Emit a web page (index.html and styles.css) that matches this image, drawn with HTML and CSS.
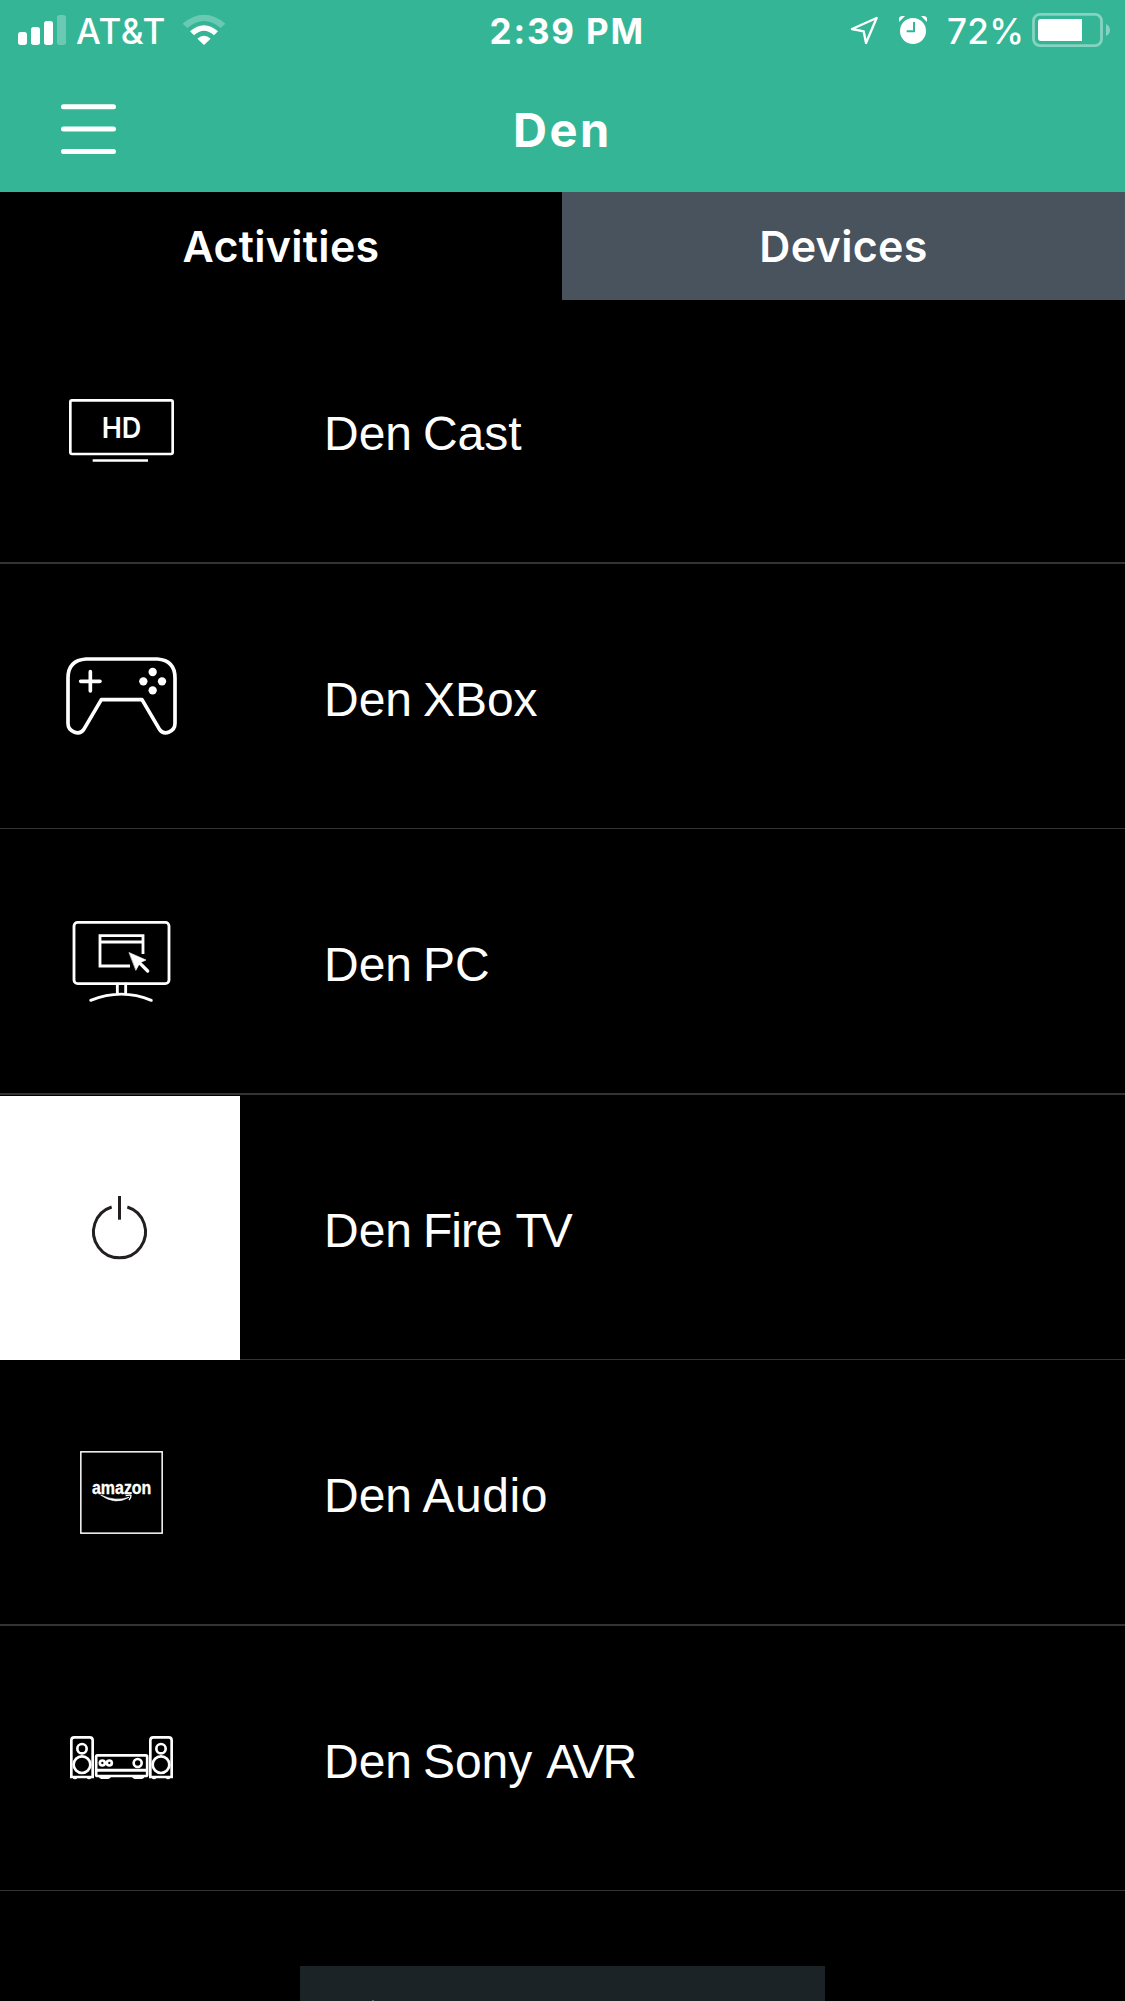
FILE: index.html
```html
<!DOCTYPE html>
<html lang="en">
<head>
<meta charset="utf-8">
<title>Den</title>
<link rel="stylesheet" href="styles.css">
</head>
<body>
<div class="screen">
  <header class="header">
    <div class="status">
      <div class="status-left">
        <svg class="signal" width="48" height="60" viewBox="18 0 48 60" fill="#fff"><rect x="18" y="32" width="9" height="13" rx="2.7"/><rect x="31" y="27" width="9" height="18" rx="2.7"/><rect x="44" y="21" width="9" height="24" rx="2.7"/><rect x="57" y="15" width="9" height="30" rx="2.7" opacity=".27"/></svg>
        <span class="carrier">AT&amp;T</span>
        <svg class="wifi" width="44" height="60" viewBox="546 0 132 180" fill="#fff"><path d="M548 71Q612 18 676 71L662 84Q612 42 562 84Z" opacity=".27"/><path d="M570 94Q612 57 654 94L642 106Q612 79 582 106Z"/><path d="M592 116Q612 99 632 116L612 135Z"/></svg>
      </div>
      <span class="clock">2:39 PM</span>
      <div class="status-right">
        <svg class="locate" width="30" height="60" viewBox="90 0 90 180" fill="none" stroke="#fff" stroke-width="7" stroke-linejoin="round"><path d="M96 87L170 54L138 129L131 94Z"/></svg>
        <svg class="alarm" width="30" height="60" viewBox="234 0 90 180"><circle cx="279" cy="93" r="39" fill="#fff"/><path d="M237 66V56Q238 48 247 48H255ZM321 66V56Q320 48 311 48H303Z" fill="#fff"/><path d="M282 66V94H260" fill="none" stroke="#34b696" stroke-width="6"/></svg>
        <span class="percent">72%</span>
        <svg class="battery" width="80" height="60" viewBox="1031 0 80 60" fill="#fff"><rect x="1033.5" y="14.3" width="68" height="31.3" rx="6.5" fill="none" stroke="#fff" stroke-width="2.8" opacity=".4"/><path d="M1041 19H1082V41H1041Q1038 41 1038 38V22Q1038 19 1041 19Z"/><path d="M1106 24Q1110 26 1110 30T1106 36Z" opacity=".4"/></svg>
      </div>
    </div>
    <div class="navbar">
      <svg class="menu" width="57" height="54" viewBox="0 0 57 54" stroke="#fff" stroke-width="5" stroke-linecap="round"><path d="M3.500 4.800H53.500M3.500 27H53.500M3.500 49.400H53.500"/></svg>
      <h1 class="title">Den</h1>
    </div>
  </header>
  <nav class="tabs">
    <div class="tab">Activities</div>
    <div class="tab tab-idle">Devices</div>
  </nav>
  <main class="list">
    <div class="row row-first">
      <div class="cell"><svg class="icon" viewBox="0 0 540 390" fill="none" stroke="#fff" stroke-width="8"><rect x="91" y="91" width="307" height="161" rx="5"/><path d="M158 271.500H324"/><text class="hd" x="185" y="203" textLength="119" lengthAdjust="spacingAndGlyphs">HD</text></svg></div>
      <span class="label">Den Cast</span>
    </div>
    <div class="row thin">
      <div class="cell"><svg class="icon" viewBox="0 12 540 390" fill="none" stroke="#fff" stroke-width="11" stroke-linejoin="round" stroke-linecap="round"><path d="M138 87H352Q405 91 405 144V280C405 305 373 318 359 299L306 209H184L131 299C117 318 84 305 84 280V144Q84 91 138 87Z"/><path d="M122 154H180M151 125V183"/><g fill="#fff" stroke="none"><circle cx="338" cy="126" r="12.500"/><circle cx="310" cy="154" r="12.500"/><circle cx="366" cy="154" r="12.500"/><circle cx="338" cy="181" r="12.500"/></g></svg></div>
      <span class="label">Den XBox</span>
    </div>
    <div class="row">
      <div class="cell"><svg class="icon" viewBox="0 -3 540 390" fill="none" stroke="#fff" stroke-width="8.500" stroke-linecap="round"><rect x="102" y="67" width="285" height="184" rx="11"/><path d="M309 162V107H180V198H270M180 126H309" stroke-linecap="butt"/><path d="M232 252V281M257 252V281M152 301Q245 264 334 301"/><path d="M268 158L318 180L300 188L288 210Z" fill="#fff" stroke-width="2"/><path d="M298 188L323 213" stroke-width="10"/></svg></div>
      <span class="label">Den PC</span>
    </div>
    <div class="row thin">
      <div class="cell cell-active"><svg class="icon" viewBox="0 -12 540 390" fill="none" stroke="#231f20" stroke-width="9"><path d="M215 111A78 78 0 1 0 262 111"/><path d="M238.500 78V149"/></svg></div>
      <span class="label">Den <span class="fire">Fire</span> <span class="tv">TV</span></span>
    </div>
    <div class="row">
      <div class="cell"><svg class="icon" viewBox="0 0 540 390" fill="none" stroke="#fff" stroke-width="4.500"><rect x="122.500" y="65.500" width="244" height="244"/><text class="brand" x="156" y="192" textLength="178" lengthAdjust="spacingAndGlyphs">amazon</text><path d="M182 195Q226 227 267 202Q226 216 182 195Z" fill="#fff" stroke-width="2"/><path d="M257 197Q274 194 273 197Q273 203 267 210" stroke-width="4"/></svg></div>
      <span class="label">Den <span class="audio">Audio</span></span>
    </div>
    <div class="row thin">
      <div class="cell"><svg class="icon" viewBox="0 -42 540 390" fill="none" stroke="#fff" stroke-width="8"><g id="speaker"><path d="M94 201V91Q94 82 103 82H149Q158 82 158 91V201Z"/><circle cx="126" cy="116" r="14"/><circle cx="126" cy="164" r="25"/><path d="M98 202H113Q112 208 105 208T98 202ZM140 202H155Q154 208 147 208T140 202Z" fill="#fff" stroke="none"/></g><use href="#speaker" x="237"/><rect x="168.500" y="136" width="153" height="62" rx="4"/><path d="M169 181H321" stroke-width="9"/><circle cx="187" cy="159" r="7.500"/><circle cx="208" cy="159" r="7.500"/><path d="M194 159H202" stroke-width="3"/><circle cx="293" cy="159" r="12"/><path d="M176 199H213Q212 207 205 207H184Q177 207 176 199ZM276 199H314Q313 207 306 207H284Q277 207 276 199Z" fill="#fff" stroke="none"/></svg></div>
      <span class="label">Den Sony <span class="avr">AVR</span></span>
    </div>
  </main>
  <div class="sheet"></div>
</div>
</body>
</html>
```
FILE: styles.css
```css
* { box-sizing: border-box; }
body { margin: 0; background: #000; color: #fff; font-family: Inter, sans-serif; }
svg { display: block; flex: none; }
.screen { height: 2001px; overflow: hidden; background: #000; }
.header { height: 192px; background: #34b696; }
.status { display: grid; grid-template-columns: 1fr auto 1fr; height: 60px; font-size: 35px; line-height: 62px; font-weight: 500; white-space: nowrap; }
.status-left { display: flex; padding-left: 18px; }
.carrier { margin-left: 10px; letter-spacing: .7px; }
.wifi { margin-left: 15.500px; }
.clock { padding-left: 9.400px; font-weight: 700; letter-spacing: 1.8px; }
.status-right { display: flex; justify-content: flex-end; padding-right: 14px; }
.alarm { margin-left: 18px; }
.percent { margin: 0 6.500px 0 19px; letter-spacing: .4px; }
.navbar { display: grid; grid-template-columns: 1fr auto 1fr; height: 132px; padding: 42px 60px 0; }
.title { margin: 0; font-size: 47px; line-height: 56px; font-weight: 700; letter-spacing: 2.600px; }
.tabs { display: flex; height: 108px; font-size: 43px; font-weight: 600; letter-spacing: .3px; line-height: 108px; text-align: center; }
.tab { width: 562px; }
.tab-idle { flex: 1; background: #48535d; }
.row { display: flex; height: 266px; border-bottom: 2px solid #333; }
.row-first { height: 264px; }
.thin { height: 265px; border-bottom-width: 1px; }
.cell { width: 240px; padding: 70px 0 0 40px; }
.cell-active { height: 264px; margin-top: 1px; background: #fff; }
.icon { width: 180px; height: 130px; }
.label { padding-left: 84px; font: 48px/271px "Liberation Sans", Arial, sans-serif; word-spacing: -2.500px; white-space: pre; }
.row-first .label { line-height: 268px; }
.fire { letter-spacing: -1px; }
.tv { margin-left: 3px; letter-spacing: -4px; }
.audio { margin-left: -.500px; letter-spacing: .6px; }
.avr { margin-left: 3px; letter-spacing: -2px; }
.hd { font: 600 84px Inter, sans-serif; fill: #fff; stroke: none; }
.brand { font: 700 56px "Liberation Sans", Arial, sans-serif; fill: #fff; stroke: #fff; stroke-width: 1px; }
.sheet { width: 525px; height: 35px; margin: 75px auto 0; background: #1c2326; }
.sheet::before { content: ""; display: block; width: 2px; height: 35px; margin-left: 72px; background: linear-gradient(transparent 34px, #596064 34px); }
```
